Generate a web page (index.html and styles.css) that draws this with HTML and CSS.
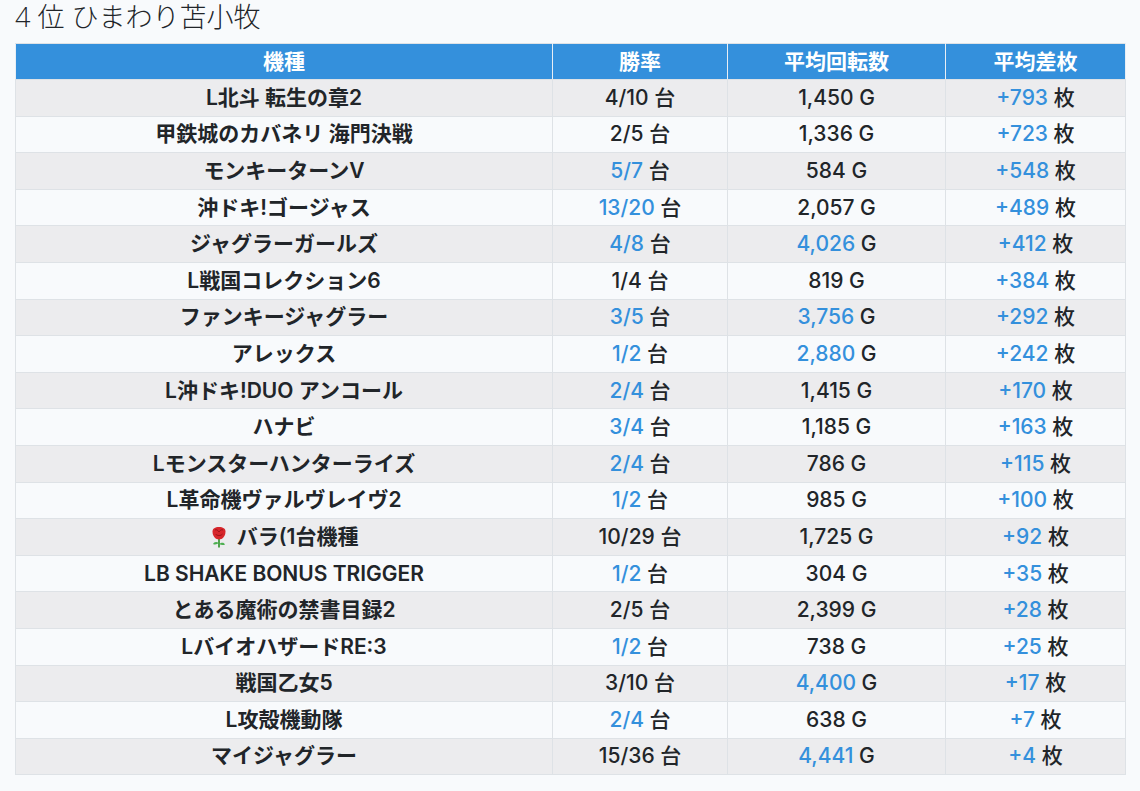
FILE: index.html
```html
<!DOCTYPE html>
<html lang="ja">
<head>
<meta charset="utf-8">
<title>4 位 ひまわり苫小牧</title>
<link rel="stylesheet" href="styles.css">
</head>
<body>
<div class="container">
  <h2 class="title">4 位 ひまわり苫小牧</h2>
  <table class="stats">
    <colgroup>
      <col class="c-name"><col class="c-rate"><col class="c-spin"><col class="c-diff">
    </colgroup>
    <thead>
      <tr><th>機種</th><th>勝率</th><th>平均回転数</th><th>平均差枚</th></tr>
    </thead>
    <tbody>
      <tr><td class="name">L北斗 転生の章2</td><td class="num">4/10 台</td><td class="num">1,450 G</td><td class="num"><span class="hl">+793</span> 枚</td></tr>
      <tr><td class="name">甲鉄城のカバネリ 海門決戦</td><td class="num">2/5 台</td><td class="num">1,336 G</td><td class="num"><span class="hl">+723</span> 枚</td></tr>
      <tr><td class="name">モンキーターンV</td><td class="num"><span class="hl">5/7</span> 台</td><td class="num">584 G</td><td class="num"><span class="hl">+548</span> 枚</td></tr>
      <tr><td class="name">沖ドキ!ゴージャス</td><td class="num"><span class="hl">13/20</span> 台</td><td class="num">2,057 G</td><td class="num"><span class="hl">+489</span> 枚</td></tr>
      <tr><td class="name">ジャグラーガールズ</td><td class="num"><span class="hl">4/8</span> 台</td><td class="num"><span class="hl">4,026</span> G</td><td class="num"><span class="hl">+412</span> 枚</td></tr>
      <tr><td class="name">L戦国コレクション6</td><td class="num">1/4 台</td><td class="num">819 G</td><td class="num"><span class="hl">+384</span> 枚</td></tr>
      <tr><td class="name">ファンキージャグラー</td><td class="num"><span class="hl">3/5</span> 台</td><td class="num"><span class="hl">3,756</span> G</td><td class="num"><span class="hl">+292</span> 枚</td></tr>
      <tr><td class="name">アレックス</td><td class="num"><span class="hl">1/2</span> 台</td><td class="num"><span class="hl">2,880</span> G</td><td class="num"><span class="hl">+242</span> 枚</td></tr>
      <tr><td class="name">L沖ドキ!DUO アンコール</td><td class="num"><span class="hl">2/4</span> 台</td><td class="num">1,415 G</td><td class="num"><span class="hl">+170</span> 枚</td></tr>
      <tr><td class="name">ハナビ</td><td class="num"><span class="hl">3/4</span> 台</td><td class="num">1,185 G</td><td class="num"><span class="hl">+163</span> 枚</td></tr>
      <tr><td class="name">Lモンスターハンターライズ</td><td class="num"><span class="hl">2/4</span> 台</td><td class="num">786 G</td><td class="num"><span class="hl">+115</span> 枚</td></tr>
      <tr><td class="name">L革命機ヴァルヴレイヴ2</td><td class="num"><span class="hl">1/2</span> 台</td><td class="num">985 G</td><td class="num"><span class="hl">+100</span> 枚</td></tr>
      <tr><td class="name"><svg class="rose" viewBox="0 0 20 22" width="20" height="22" aria-hidden="true"><path d="M10 13 V21.5" stroke="#3f9b3a" stroke-width="1.8" fill="none"/><path d="M10 17 C7 15 5 16 4 18 C6 19 8 18.5 10 17Z" fill="#4caf50"/><path d="M10 18 C13 16 15 16.5 16 18.5 C14 19.5 12 19 10 18Z" fill="#4caf50"/><path d="M3.5 5.5 C3.5 2.5 6 1 10 1 C14 1 16.5 2.5 16.5 5.5 C16.5 10 13.5 13.5 10 13.5 C6.5 13.5 3.5 10 3.5 5.5Z" fill="#d7262b"/><path d="M6 4 C7.5 3 9 4.5 10 6 C11 4.5 12.5 3 14 4" stroke="#9e1419" stroke-width="1" fill="none"/><path d="M6.5 8 C8 10 12 10 13.5 8" stroke="#9e1419" stroke-width="1" fill="none"/></svg> バラ(1台機種</td><td class="num">10/29 台</td><td class="num">1,725 G</td><td class="num"><span class="hl">+92</span> 枚</td></tr>
      <tr><td class="name">LB SHAKE BONUS TRIGGER</td><td class="num"><span class="hl">1/2</span> 台</td><td class="num">304 G</td><td class="num"><span class="hl">+35</span> 枚</td></tr>
      <tr><td class="name">とある魔術の禁書目録2</td><td class="num">2/5 台</td><td class="num">2,399 G</td><td class="num"><span class="hl">+28</span> 枚</td></tr>
      <tr><td class="name">LバイオハザードRE:3</td><td class="num"><span class="hl">1/2</span> 台</td><td class="num">738 G</td><td class="num"><span class="hl">+25</span> 枚</td></tr>
      <tr><td class="name">戦国乙女5</td><td class="num">3/10 台</td><td class="num"><span class="hl">4,400</span> G</td><td class="num"><span class="hl">+17</span> 枚</td></tr>
      <tr><td class="name">L攻殻機動隊</td><td class="num"><span class="hl">2/4</span> 台</td><td class="num">638 G</td><td class="num"><span class="hl">+7</span> 枚</td></tr>
      <tr><td class="name">マイジャグラー</td><td class="num">15/36 台</td><td class="num"><span class="hl">4,441</span> G</td><td class="num"><span class="hl">+4</span> 枚</td></tr>
    </tbody>
  </table>
</div>
</body>
</html>
```
FILE: styles.css
```css
html, body {
  margin: 0;
  padding: 0;
  background: #f8fafc;
}
body {
  font-family: "Inter", "Noto Sans CJK JP", sans-serif;
  color: #212529;
}
.container {
  padding: 0 15px;
}
.title {
  margin: 0;
  height: 43px;
  font-family: "Open Sans", "Noto Sans CJK JP", sans-serif;
  font-size: 27px;
  line-height: 34px;
  font-weight: 300;
  color: #212529;
}
.stats {
  width: 1110px;
  border-collapse: collapse;
  table-layout: fixed;
  font-size: 21px;
  line-height: 24px;
}
.c-name { width: 537px; }
.c-rate { width: 175px; }
.c-spin { width: 218px; }
.c-diff { width: 180px; }
.stats th,
.stats td {
  border: 1px solid #dee2e6;
  text-align: center;
  padding: 0;
  vertical-align: middle;
}
.stats th {
  background: #3490dc;
  color: #fff;
  font-weight: 700;
  height: 35px;
  border-color: #dee2e6 #e8eef5 #dee2e6 #e8eef5;
}
.stats td {
  height: 35.6px;
}
.stats tbody tr:nth-child(odd) {
  background: #ececee;
}
.stats tbody tr:nth-child(even) {
  background: #f8fafc;
}
.name {
  font-weight: 600;
}
.num {
  font-weight: 500;
}
.hl {
  color: #3490dc;
}
.rose {
  vertical-align: -4px;
  margin-right: 2px;
}
```
